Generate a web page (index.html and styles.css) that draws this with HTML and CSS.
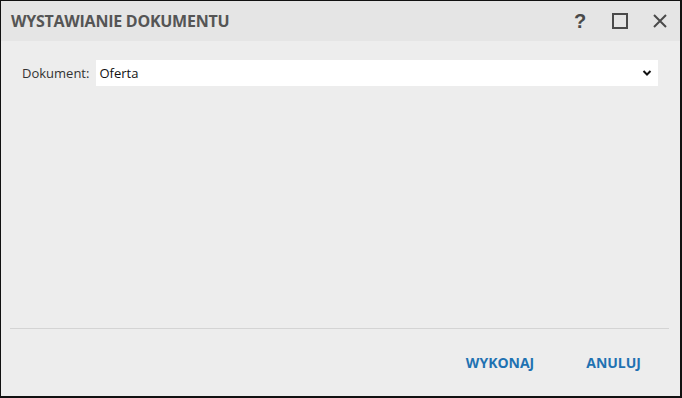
FILE: index.html
```html
<!DOCTYPE html>
<html lang="pl">
<head>
  <meta charset="UTF-8" />
  <title>Wystawianie dokumentu</title>
  <link rel="stylesheet" href="styles.css">
</head>
<body>
  <div class="dialog">
    <div class="titlebar">
      <div class="title">WYSTAWIANIE DOKUMENTU</div>
      <div class="tools">
        <span class="tool help">?</span>
        <span class="tool">
          <svg width="16" height="16" viewBox="0 0 16 16"><rect x="1" y="1" width="14" height="14" fill="none" stroke="#4a4a4a" stroke-width="2"/></svg>
        </span>
        <span class="tool">
          <svg width="16" height="16" viewBox="0 0 16 16"><path d="M2 2 L14 14 M14 2 L2 14" stroke="#4a4a4a" stroke-width="2" fill="none"/></svg>
        </span>
      </div>
    </div>
    <div class="content">
      <div class="row">
        <label for="doc">Dokument:</label>
        <div class="select">
          <span>Oferta</span>
          <svg width="10" height="8" viewBox="0 0 10 8"><path d="M1.5 2 L5 5.5 L8.5 2" stroke="#111" stroke-width="2" fill="none"/></svg>
        </div>
      </div>
    </div>
    <div class="footer">
      <button class="btn">WYKONAJ</button>
      <button class="btn">ANULUJ</button>
    </div>
  </div>
</body>
</html>
```

FILE: styles.css
```css
body {
  margin: 0;
  overflow: hidden;
  background: #fff;
  font-family: 'Open Sans', 'Noto Sans', sans-serif;
}
.dialog {
  width: 679px;
  height: 395px;
  border-style: solid;
  border-color: #111;
  border-width: 1px 2px 2px 1px;
  background: #ededed;
  display: flex;
  flex-direction: column;
}
.titlebar {
  height: 40px;
  background: #e5e5e5;
  display: flex;
  align-items: center;
  justify-content: space-between;
  padding: 0 0 0 10px;
}
.title {
  font-size: 16px;
  font-weight: bold;
  color: #555;
  letter-spacing: -0.25px;
}
.tools {
  display: flex;
  align-items: center;
}
.tool {
  width: 40px;
  display: flex;
  justify-content: center;
  align-items: center;
  color: #4a4a4a;
}
.help {
  font-size: 20px;
  font-weight: bold;
  font-family: 'Liberation Sans', sans-serif;
}
.content {
  flex: 1;
  padding: 19px 11px 0 12px;
  border-bottom: 1px solid #d4d4d4;
  margin: 0 11px 0 9px;
}
.row {
  display: flex;
  align-items: center;
  gap: 7px;
}
label {
  font-size: 13px;
  color: #333;
}
.select {
  flex: 1;
  height: 26px;
  background: #fff;
  display: flex;
  align-items: center;
  justify-content: space-between;
  padding: 0 6px 0 3px;
  font-size: 13px;
  color: #111;
}
.footer {
  height: 67px;
  display: flex;
  justify-content: flex-end;
  align-items: center;
  padding-right: 23px;
  gap: 20px;
}
.btn {
  background: none;
  border: none;
  font-family: inherit;
  font-weight: bold;
  font-size: 14px;
  color: #1f72b2;
  padding: 6px 16px;
}
```
